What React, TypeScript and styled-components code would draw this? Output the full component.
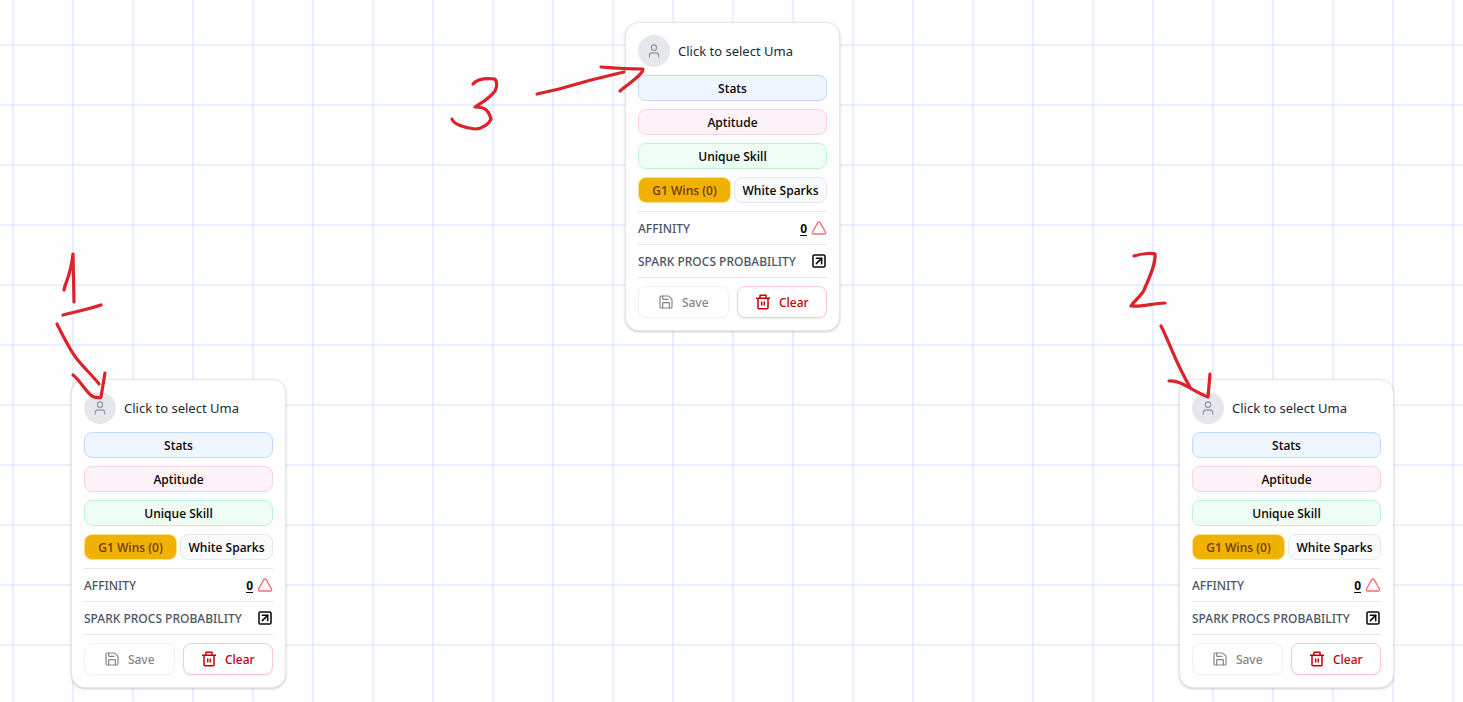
import React from "react";
import styled, { createGlobalStyle, css } from "styled-components";
import { Save, SquareArrowUpRight, Triangle, User } from "lucide-react";

const GlobalStyle = createGlobalStyle`
  *, *::before, *::after { box-sizing: border-box; }
  body {
    margin: 0;
    background: #fefefe;
    color: #0a0a0a;
    font-family: "Noto Sans", "Open Sans", sans-serif;
  }
  button, a { font: inherit; color: inherit; cursor: pointer; }
`;

const Canvas = styled.main`
  display: flex;
  justify-content: space-between;
  align-items: flex-start;
  min-height: 100vh;
  padding: 22px 69px 14px 71px;
  overflow: hidden;
  background-color: #fefefe;
  background-image:
    linear-gradient(to right, rgba(59, 110, 246, 0.1) 2px, transparent 2px),
    linear-gradient(to bottom, rgba(59, 110, 246, 0.1) 2px, transparent 2px);
  background-size: 60px 60px;
  background-position: 12px 44px;
`;

const Node = styled.div<{ $parent?: boolean }>`
  position: relative;
  flex: none;
  margin-top: ${({ $parent }) => ($parent ? 0 : 357)}px;
`;

const Card = styled.article`
  width: 215px;
  padding: 12px;
  border: 1px solid #e5e7eb;
  border-radius: 14px;
  background: #fff;
  box-shadow: 0 1px 3px rgba(0, 0, 0, 0.12), 0 1px 2px rgba(0, 0, 0, 0.08);
`;

const Picker = styled.button`
  && { color: #1e2939; }
  display: flex;
  align-items: center;
  gap: 8px;
  width: 100%;
  margin-bottom: 8px;
  padding: 0;
  border: 0;
  background: none;
  font-size: 13px;
  line-height: 20px;
  white-space: nowrap;
`;

const Avatar = styled.span`
  display: grid;
  place-items: center;
  width: 32px;
  height: 32px;
  border-radius: 50%;
  background: #e5e7eb;
  color: #99a1af;
`;

const Stack = styled.div`
  display: flex;
  flex-direction: column;
  gap: 8px;
  margin-bottom: 8px;
`;

const Pair = styled.div<{ $gap: number }>`
  display: grid;
  grid-template-columns: 1fr 1fr;
  gap: ${({ $gap }) => $gap}px;
`;

const tones = {
  blue: css`background: #eff6ff; border-color: #bedbff;`,
  pink: css`background: #fdf2f8; border-color: #fccee8;`,
  green: css`background: #f0fdf4; border-color: #b9f8cf;`,
  gold: css`background: #f0b100; border-color: #fbe08a; && { color: #733e0a; }`,
  plain: css`background: #f9fafb; border-color: #e5e7eb;`,
};

const Tag = styled.button<{ $tone: keyof typeof tones }>`
  height: 26px;
  padding: 2px 0 0;
  border: 1px solid;
  border-radius: 8px;
  font-family: "Open Sans", "Noto Sans", sans-serif;
  font-size: 12px;
  font-weight: 600;
  line-height: 16px;
  white-space: nowrap;
  ${({ $tone }) => tones[$tone]}
`;

const Row = styled.div`
  display: flex;
  align-items: center;
  justify-content: space-between;
  height: 33px;
  border-top: 1px solid #e5e7eb;
  color: #4a5565;
  font-size: 12px;
  font-weight: 500;
  line-height: 16px;
  white-space: nowrap;
`;

const Label = styled.span`
  padding-top: 2px;
`;

const Score = styled.span`
  display: flex;
  align-items: center;
  gap: 4px;
  color: #f56c72;
`;

const ScoreLink = styled.a`
  && { color: #0a0a0a; }
  padding-top: 2px;
  font-weight: 700;
  text-underline-offset: 2px;
`;

const IconButton = styled.button`
  && { color: #0a0a0a; }
  display: flex;
  padding: 0;
  border: 0;
  background: none;
`;

const Actions = styled(Pair)`
  padding-top: 8px;
  border-top: 1px solid #e5e7eb;
`;

const Action = styled.button<{ $danger?: boolean }>`
  && { color: ${({ $danger }) => ($danger ? "#c10007" : "#858585")}; }
  display: flex;
  align-items: center;
  justify-content: center;
  gap: 8px;
  height: 32px;
  padding: 0;
  border: 1px solid ${({ $danger }) => ($danger ? "#ffc9c9" : "#f2f2f2")};
  border-radius: 8px;
  background: #fff;
  box-shadow: 0 1px 2px rgba(0, 0, 0, ${({ $danger }) => ($danger ? 0.08 : 0.03)});
  font-size: 12px;
  font-weight: 500;
  line-height: 16px;
`;

const Ink = styled.svg`
  position: absolute;
  top: 0;
  left: 0;
  width: 1px;
  height: 1px;
  overflow: visible;
  pointer-events: none;
  fill: none;
  stroke: #dc222a;
  stroke-width: 3.2;
  stroke-linecap: round;
  stroke-linejoin: round;
`;

/* Pen strokes, measured from the top left corner of the card they point at. */
const steps = [
  {
    id: "1",
    parent: false,
    strokes: [
      "M-7 -89 C-6 -97 -1 -100 2 -125 L3 -77",
      "M-8 -64 C4 -67 18 -70 30 -74",
      "M-14 -55 C-7 -41 0 -27 6 -20 C13 -11 22 -3 28 5",
      "M2 -4 C8 0 15 13 21 17 C25 19 28 19 30 18 L34 -6",
    ],
  },
  {
    id: "3",
    parent: true,
    strokes: [
      "M-152 62 C-148 57 -139 56 -130 57 C-128 60 -128 65 -130 69 C-136 77 -144 81 -150 85 C-142 85 -137 86 -134 97 C-136 102 -143 107 -150 107 C-160 106 -172 102 -173 97",
      "M-88 72 L-66 67 L-34 58 L-1 50",
      "M-24 45 C-12 46 4 47 18 47 C18 53 4 61 -5 69",
    ],
  },
  {
    id: "2",
    parent: false,
    strokes: [
      "M-45 -123 C-36 -126 -26 -126 -24 -125 C-23 -114 -31 -98 -36 -87 C-41 -80 -45 -78 -48 -73 C-36 -72 -26 -76 -14 -76",
      "M-18 -53 C-10 -38 -3 -15 11 8",
      "M-10 2 C3 1 14 13 29 18 L31 -5",
    ],
  },
];

function TrashIcon() {
  return (
    <svg width="16" height="16" viewBox="0 0 16 16" fill="none" stroke="currentColor" strokeWidth="1.5" strokeLinejoin="round" aria-hidden="true">
      <path d="M1 4.2h14M5 4V1.2h6V4M3 4.2v9.6q0 1 1 1h8q1 0 1-1V4.2M6.7 7.5v4M9.3 7.5v4" />
    </svg>
  );
}

function UmaCard() {
  return (
    <Card>
      <Picker type="button">
        <Avatar><User size={16} /></Avatar>
        Click to select Uma
      </Picker>
      <Stack>
        <Tag type="button" $tone="blue">Stats</Tag>
        <Tag type="button" $tone="pink">Aptitude</Tag>
        <Tag type="button" $tone="green">Unique Skill</Tag>
        <Pair $gap={3}>
          <Tag type="button" $tone="gold">G1 Wins (0)</Tag>
          <Tag type="button" $tone="plain">White Sparks</Tag>
        </Pair>
      </Stack>
      <Row>
        <Label>AFFINITY</Label>
        <Score>
          <ScoreLink href="#affinity">0</ScoreLink>
          <Triangle size={16} />
        </Score>
      </Row>
      <Row>
        <Label>SPARK PROCS PROBABILITY</Label>
        <IconButton type="button" aria-label="Open spark procs probability">
          <SquareArrowUpRight size={16} strokeWidth={2.3} />
        </IconButton>
      </Row>
      <Actions $gap={8}>
        <Action type="button"><Save size={16} strokeWidth={1.8} /><Label>Save</Label></Action>
        <Action type="button" $danger><TrashIcon /><Label>Clear</Label></Action>
      </Actions>
    </Card>
  );
}

export default function App() {
  return (
    <>
      <GlobalStyle />
      <Canvas>
        {steps.map((step) => (
          <Node key={step.id} $parent={step.parent}>
            <UmaCard />
            <Ink aria-hidden="true">
              {step.strokes.map((d) => <path key={d} d={d} />)}
            </Ink>
          </Node>
        ))}
      </Canvas>
    </>
  );
}
